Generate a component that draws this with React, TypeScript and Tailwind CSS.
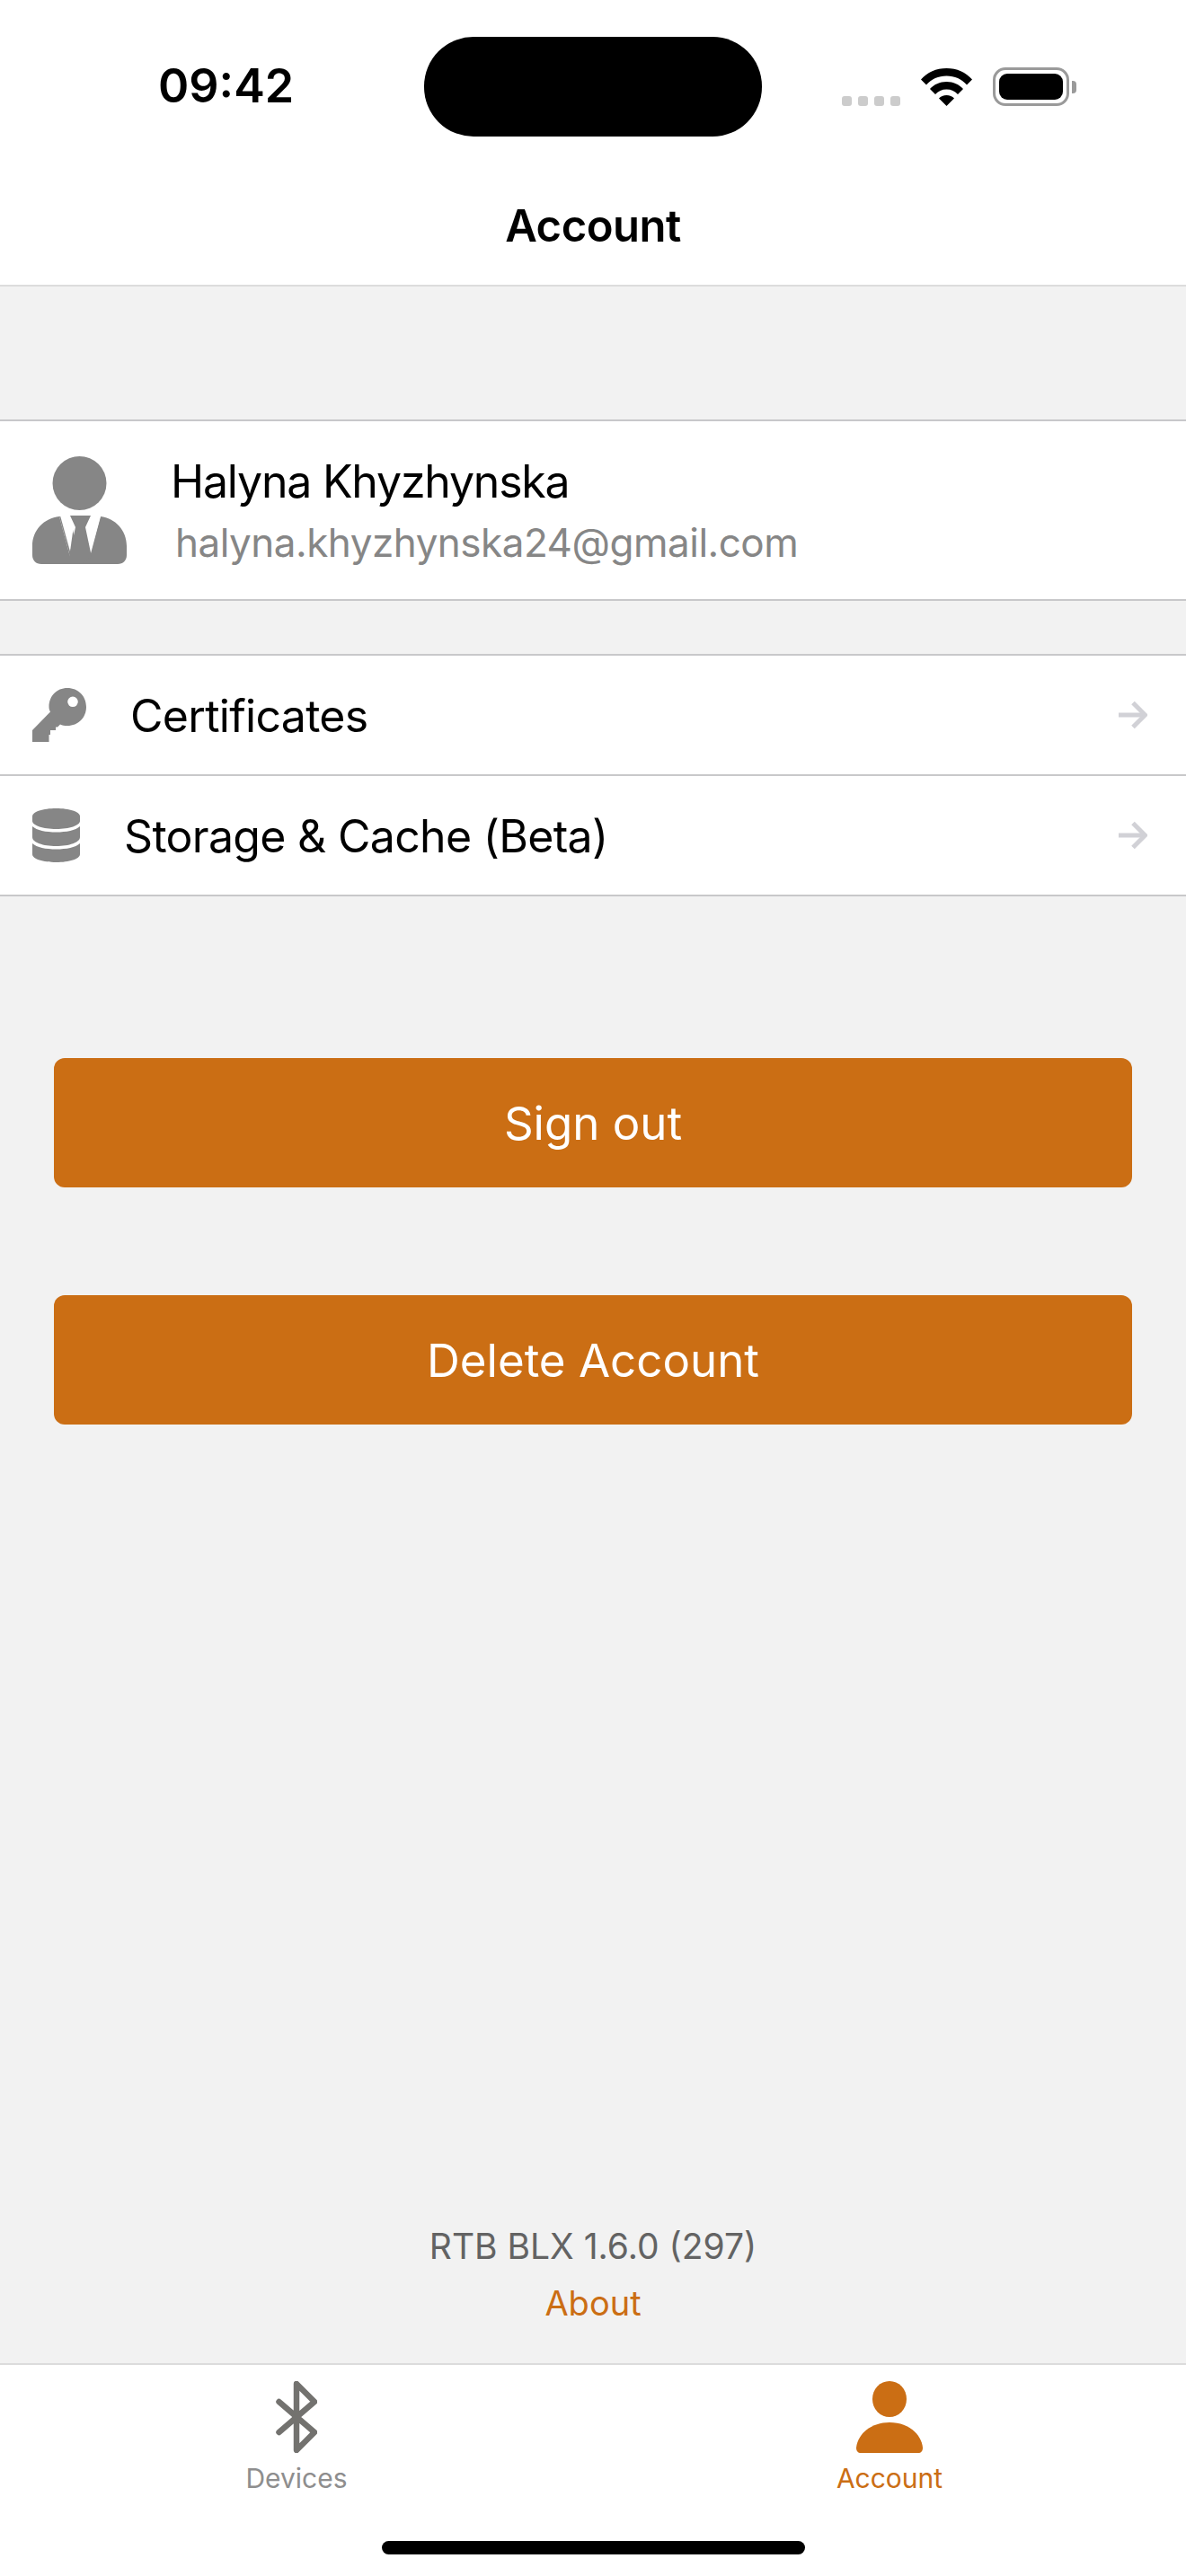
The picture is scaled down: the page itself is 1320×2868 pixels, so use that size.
const ArrowIcon = () => (
  <svg width="32" height="32" viewBox="0 0 32 32" fill="none" stroke="#d1d1d6" strokeWidth="5">
    <path d="M0 16H29" />
    <path d="M16 2.5L29.5 16L16 29.5" />
  </svg>
);

const AvatarIcon = () => (
  <svg width="106" height="120" viewBox="0 0 106 120" fill="#868686">
    <circle cx="52.5" cy="30" r="30" />
    <path d="M0 100C0 82 13 69 30 67L42 112H64L76 67C92 69 105 82 105 100V110C105 116 101 120 95 120H10C4 120 0 116 0 110Z" />
    <path d="M30 67H42L53 120H52L42 112Z" />
    <path d="M31 66L42 106L47 70L42 66Z" fill="#ffffff" />
    <path d="M76 66L65 106L60 70L65 66Z" fill="#ffffff" />
    <path d="M42 66H65L59 79L66 112L53 120L41 112L48 79Z" />
  </svg>
);

const KeyIcon = () => (
  <svg width="60" height="60" viewBox="0 0 60 60" fill="#868686">
    <path
      fillRule="evenodd"
      d="M39 0C51 0 60 9 60 21C60 33 51 42 39 42C36 42 33 41.5 31 40.5L28 43.5H26V47H20V52H18.5V60H0V47L20 26.5C19 25 18.5 23 18.5 21C18.5 9 27 0 39 0ZM45 9.5A5.8 5.8 0 1 0 45 21.1A5.8 5.8 0 1 0 45 9.5Z"
    />
  </svg>
);

const DbIcon = () => (
  <svg width="53" height="60" viewBox="0 0 53 60" fill="#868686">
    <path d="M0 9C0 3.5 12 0 26.5 0C41 0 53 3.5 53 9V14C53 19 41 23 26.5 23C12 23 0 19 0 14Z" />
    <path d="M0 20C5 24.5 15 26.5 26.5 26.5C38 26.5 48 24.5 53 20V32C53 38 41 42 26.5 42C12 42 0 38 0 32Z" />
    <path d="M0 39C5 43.5 15 45.5 26.5 45.5C38 45.5 48 43.5 53 39V51C53 56.5 41 60 26.5 60C12 60 0 56.5 0 51Z" />
  </svg>
);

const BluetoothIcon = () => (
  <svg width="46" height="80" viewBox="0 0 46 80" fill="none" stroke="#73726f" strokeWidth="6.5" strokeLinecap="round" strokeLinejoin="round">
    <path d="M3.5 23L43 57L23 77V3L43 23L3.5 57" />
  </svg>
);

const PersonIcon = () => (
  <svg width="74" height="80" viewBox="0 0 74 80" fill="#cb6e14">
    <ellipse cx="37" cy="20" rx="19" ry="20" />
    <path d="M37 46C57 46 72 58 74 74C74 78 72 80 69 80H5C2 80 0 78 0 74C2 58 17 46 37 46Z" />
  </svg>
);

const WifiIcon = () => (
  <svg width="57" height="42" viewBox="0 0 57 42" fill="#000000">
    <path d="M28.5 0C40 0 50 4.5 57 12.5L51 18.5C45.5 12 37.5 8.5 28.5 8.5C19.5 8.5 11.5 12 6 18.5L0 12.5C7 4.5 17 0 28.5 0Z" />
    <path d="M28.5 15C36 15 42.5 18 47 23L41 29C38 25.5 33.5 23.5 28.5 23.5C23.5 23.5 19 25.5 16 29L10 23C14.5 18 21 15 28.5 15Z" />
    <path d="M28.5 30C32 30 35 31.2 37 33.5L28.5 42L20 33.5C22 31.2 25 30 28.5 30Z" />
  </svg>
);

const BatteryIcon = () => (
  <div className="flex items-center">
    <div className="w-[85px] h-[43px] rounded-[14px] border-[3px] border-[#9a9a9a] p-[4px]">
      <div className="w-full h-full rounded-[9px] bg-black" />
    </div>
    <div className="ml-[3px] w-[5px] h-[14px] rounded-r-[4px] bg-[#9a9a9a]" />
  </div>
);

function StatusBar() {
  return (
    <div className="flex h-[222px] pt-[41px] pl-[176px]">
      <div className="w-[296px] pt-[29px] text-[52px] leading-[52px] font-semibold text-black">09:42</div>
      <div className="w-[376px] h-[111px] rounded-[55px] bg-black" />
      <div className="flex items-end h-[77px] ml-[89px]">
        <div className="flex gap-[7px] w-[88px]">
          {[0, 1, 2, 3].map((d) => (
            <div key={d} className="w-[11px] h-[11px] rounded-[3px] bg-[#cccccc]" />
          ))}
        </div>
        <WifiIcon />
        <div className="ml-[23px]">
          <BatteryIcon />
        </div>
      </div>
    </div>
  );
}

function MenuRow({ icon, label, iconBox, rowClass }: { icon: React.ReactNode; label: string; iconBox: string; rowClass: string }) {
  return (
    <div className={`flex items-center pl-[36px] pr-[43px] ${rowClass}`}>
      <div className={iconBox}>{icon}</div>
      <div className="pt-[2px] text-[50px] leading-[60px] tracking-[-0.7px] text-black">{label}</div>
      <div className="ml-auto">
        <ArrowIcon />
      </div>
    </div>
  );
}

export default function App() {
  return (
    <div className="flex flex-col w-[1320px] h-[2868px] bg-[#f2f2f2] font-['Inter',sans-serif]">
      <div className="h-[319px] bg-white border-b-2 border-[#dcdcdc]">
        <StatusBar />
        <div className="text-center text-[49px] leading-[60px] font-semibold text-black tracking-[-0.5px]">Account</div>
      </div>

      <div className="flex items-center mt-[148px] h-[202px] pl-[36px] bg-white border-y-2 border-[#c8c8ca]">
        <AvatarIcon />
        <div className="ml-[48px] mt-[1px]">
          <div className="text-[50px] leading-[60px] tracking-[-1.2px] text-black">Halyna Khyzhynska</div>
          <div className="ml-[5px] mt-[10px] text-[44px] leading-[56px] tracking-[-0.5px] text-[#868686]">halyna.khyzhynska24@gmail.com</div>
        </div>
      </div>

      <div className="mt-[59px] bg-white border-y-2 border-[#c8c8ca]">
        <MenuRow icon={<KeyIcon />} label="Certificates" iconBox="w-[109px]" rowClass="h-[134px] border-b-2 border-[#c8c8ca]" />
        <MenuRow icon={<DbIcon />} label="Storage & Cache (Beta)" iconBox="w-[102px]" rowClass="h-[132px]" />
      </div>

      <div className="mt-[180px] mx-[60px] flex flex-col gap-[120px]">
        <div className="flex items-center justify-center h-[144px] pt-[2px] rounded-[12px] bg-[#cb6e14] text-[51px] text-white">Sign out</div>
        <div className="flex items-center justify-center h-[144px] pt-[2px] rounded-[12px] bg-[#cb6e14] text-[51px] text-white">Delete Account</div>
      </div>

      <div className="mt-auto pb-[39px] text-center">
        <div className="text-[39px] leading-[56px] text-[#636363]">RTB BLX 1.6.0 (297)</div>
        <div className="mt-[7px] text-[38px] leading-[56px] text-[#cb6e14]">About</div>
      </div>

      <div className="h-[237px] bg-white border-t-2 border-[#dcdcdc] relative">
        <div className="flex pt-[18px]">
          <div className="w-[660px] flex flex-col items-center">
            <BluetoothIcon />
            <div className="mt-[10px] text-[30px] leading-[36px] text-[#8e8e8e]">Devices</div>
          </div>
          <div className="w-[660px] flex flex-col items-center">
            <PersonIcon />
            <div className="mt-[10px] text-[30px] leading-[36px] text-[#cb6e14]">Account</div>
          </div>
        </div>
        <div className="absolute left-[425px] bottom-[24px] w-[471px] h-[15px] rounded-full bg-black" />
      </div>
    </div>
  );
}
